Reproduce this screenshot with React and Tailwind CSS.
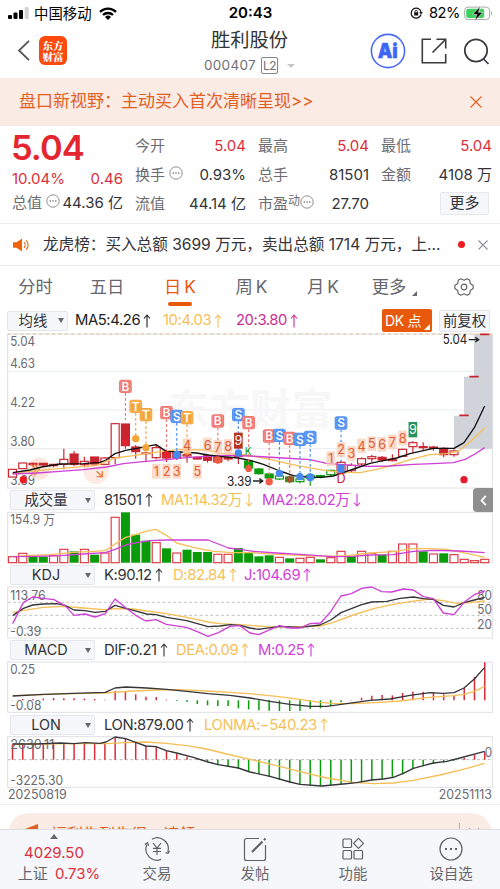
import React from 'react';

const RED = '#c9252f';
const GREEN = '#0a9b0a';
const YELLOW = '#f6bf56';
const PURPLE = '#cf3fd6';
const INK = '#35353a';

// x of the n-th trading day, chart space is 1500 units wide
const dayX = (n) => 37.5 + n * 30.8;

const Arrow = ({ down }) => (
  <svg viewBox="0 0 8 14" className={`ml-[3px] h-[14px] w-[8px] shrink-0 ${down ? 'rotate-180' : ''}`} fill="none" stroke="currentColor" strokeWidth="1.1">
    <path d="M4 13.5V1M1 4.5 4 1l3 3.5" />
  </svg>
);

const Dots = () => (
  <svg viewBox="0 0 14 14" className="mb-[6px] h-[14px] w-[14px] shrink-0" fill="none" stroke="#85858a" strokeWidth="0.9">
    <circle cx="7" cy="7" r="6.2" />
    <path d="M3.6 7h1.4M6.3 7h1.4M9 7h1.4" strokeWidth="1.3" />
  </svg>
);

const StatusBar = () => (
  <div className="flex h-[27px] items-center justify-between pl-2 pr-[7px] text-[15px] text-black">
    <div className="flex w-[180px] items-center">
      <svg viewBox="0 0 21 12" className="h-[12px] w-[21px]">
        <rect x="0" y="8" width="4" height="4" rx="1" />
        <rect x="5.5" y="5.5" width="4" height="6.5" rx="1" />
        <rect x="11" y="3" width="4" height="9" rx="1" />
        <rect x="16.7" y="0" width="4" height="12" rx="1" fill="#d2d2d4" />
      </svg>
      <span className="ml-[5px] text-[14.4px]">中国移动</span>
      <svg viewBox="0 0 18 13" className="ml-[7px] h-[13px] w-[18px]" fill="none" stroke="#000" strokeWidth="2.3">
        <path d="M1 4.8a11.5 11.5 0 0 1 16 0M4 8a7.2 7.2 0 0 1 10 0" />
        <path d="M9 13 6 9.9a4.4 4.4 0 0 1 6 0z" fill="#000" stroke="none" />
      </svg>
    </div>
    <span className="text-[15px] font-semibold">20:43</span>
    <div className="flex w-[180px] items-center justify-end">
      <svg viewBox="0 0 13 12" className="h-[12px] w-[13px]" fill="none" stroke="#111" strokeWidth="1.2">
        <path d="M11 7.5A5 5 0 1 1 11 4.8" />
        <path d="m9.3 5 3.5 0-1.7 2.4z" fill="#111" stroke="none" />
        <rect x="4.2" y="5.3" width="4" height="3.2" fill="#111" stroke="none" />
        <path d="M5 5.5V4.6a1.2 1.2 0 0 1 2.4 0v.9" strokeWidth=".9" />
      </svg>
      <span className="ml-[6px] text-[14.6px] tracking-[-0.4px]">82%</span>
      <svg viewBox="0 0 29 15" className="ml-[4px] h-[15px] w-[29px]">
        <rect x=".6" y="1.1" width="25" height="12.4" rx="3.5" fill="#fff" stroke="#aaa" />
        <rect x="2.2" y="2.7" width="18" height="9.2" rx="2" fill="#3fd05d" />
        <path d="M27 5.2c1.4.4 1.4 3.8 0 4.2z" fill="#aaa" />
        <path d="M16.5 0 8.5 8.4h4.4L10.5 15 19 6.3h-4.6z" fill="#000" stroke="#fff" strokeWidth=".6" />
      </svg>
    </div>
  </div>
);

const NavBar = () => (
  <div className="flex h-[51px] items-start justify-between pl-[17px] pr-[10px]">
    <div className="flex w-[142px] items-center pt-[9px]">
      <svg viewBox="0 0 13 21" className="h-[21px] w-[13px]" fill="none" stroke="#555" strokeWidth="1.8">
        <path d="M12 .8 2 10.5 12 20.2" />
      </svg>
      <div className="ml-[9px] flex h-[29px] w-[28px] flex-col items-center justify-center rounded-[6px] bg-[#fb4a0c] font-['Noto_Serif_CJK_SC','Noto_Sans_CJK_SC',serif] text-[10.5px] font-black leading-[11px] text-white">
        <span>东方</span>
        <span>财富</span>
      </div>
    </div>
    <div className="flex flex-col items-center">
      <span className="text-[19.3px] leading-[27px] text-[#333]">胜利股份</span>
      <div className="flex items-center text-[13.5px] leading-[23px] text-[#6f6f74]">
        <span className="tracking-[0.3px]">000407</span>
        <span className="ml-[5px] rounded-[2px] border border-[#85858a] px-[1px] text-[12px] leading-[15px] tracking-[-0.5px]">L2</span>
        <span className="ml-[9px] border-x-[4px] border-t-[4px] border-x-transparent border-t-[#c6c6ca]" />
      </div>
    </div>
    <div className="flex w-[150px] items-center justify-end pt-[6px]">
      <svg viewBox="0 0 36 36" className="h-[36px] w-[36px]">
        <circle cx="18" cy="18" r="16.6" fill="none" stroke="#4a6cf0" strokeWidth="1.6" />
        <text x="7.8" y="25" fontSize="20" fontWeight="900" fill="#3d66f5" stroke="#3d66f5" strokeWidth=".5" textLength="20" lengthAdjust="spacingAndGlyphs">Ai</text>
      </svg>
      <svg viewBox="0 0 26 26" className="ml-[15px] h-[26px] w-[26px]" fill="none" stroke="#3b3b40" strokeWidth="1.6">
        <path d="M10 1.3H1.3v23.4h23.4V16M15.5 1.3h9.2v9.2M24.5 1.5 11.5 14.5" />
      </svg>
      <svg viewBox="0 0 27 27" className="ml-[16px] h-[27px] w-[27px]" fill="none" stroke="#3b3b40" strokeWidth="1.7">
        <circle cx="13" cy="12.5" r="11.2" />
        <path d="m20.5 21 5 5" />
      </svg>
    </div>
  </div>
);

const Banner = () => (
  <div className="flex h-[48px] items-center justify-between bg-[#fbebe5] pl-[19px] pr-[18px] text-[17px] text-[#e2601f]">
    <span>盘口新视野：主动买入首次清晰呈现&gt;&gt;</span>
    <svg viewBox="0 0 12 12" className="h-[12px] w-[12px]" fill="none" stroke="currentColor" strokeWidth="1.1">
      <path d="m.5.5 11 11m0-11-11 11" />
    </svg>
  </div>
);

const Stat = ({ label, extra, value, red }) => (
  <div className="flex h-[29px] items-center whitespace-nowrap text-[15px]">
    <span className="text-[#6c6c72]">{label}</span>
    {extra}
    <span className={`ml-auto ${red ? 'text-[#dc2f3a]' : 'text-[#333338]'}`}>{value}</span>
  </div>
);

const Quote = () => (
  <div className="grid h-[98px] grid-cols-4 gap-x-3 border-b border-[#ececef] pl-3 pr-2 pt-[6px]">
    <div>
      <div className="ml-[-1px] h-[34px] text-[34.5px] font-semibold leading-[32px] tracking-[-1px] text-[#e3262f]">5.04</div>
      <div className="mt-[3px] flex h-[20px] items-center justify-between text-[15px] text-[#dc2f3a]">
        <span>10.04%</span>
        <span>0.46</span>
      </div>
      <Stat label="总值" extra={<span className="ml-[4px]"><Dots /></span>} value="44.36 亿" />
    </div>
    <div>
      <Stat label="今开" value="5.04" red />
      <Stat label="换手" extra={<span className="ml-[4px]"><Dots /></span>} value="0.93%" />
      <Stat label="流值" value="44.14 亿" />
    </div>
    <div>
      <Stat label="最高" value="5.04" red />
      <Stat label="总手" value="81501" />
      <Stat label="市盈" extra={<><span className="mb-[8px] text-[12px] text-[#6c6c72]">动</span><Dots /></>} value="27.70" />
    </div>
    <div>
      <Stat label="最低" value="5.04" red />
      <Stat label="金额" value="4108 万" />
      <div className="flex h-[27px] items-center justify-end pr-[3px]">
        <span className="flex h-[23px] w-[49px] items-center justify-center rounded-[2px] border border-[#e6e8ed] bg-[#f5f7fa] text-[15px] text-[#333338]">更多</span>
      </div>
    </div>
  </div>
);

const News = () => (
  <div className="flex h-[42px] items-center border-b border-[#ececef] pl-[13px] pr-3 text-[15.6px] text-[#333338]">
    <svg viewBox="0 0 17 14" className="h-[14px] w-[17px] shrink-0">
      <path d="M0 4.2h3.5L9 .5v13L3.5 9.8H0z" fill="#f0620f" />
      <path d="M11 4.2a4 4 0 0 1 0 5.6M13.2 2.4a6.5 6.5 0 0 1 0 9.2" fill="none" stroke="#f0620f" strokeWidth="1.1" />
    </svg>
    <span className="ml-[13px] whitespace-nowrap">龙虎榜：买入总额 3699 万元，卖出总额 1714 万元，上...</span>
    <span className="ml-auto h-[7px] w-[7px] shrink-0 rounded-full bg-[#f01c24]" />
    <svg viewBox="0 0 10 10" className="ml-[13px] h-[10px] w-[10px] shrink-0" fill="none" stroke="#909095" strokeWidth="1.1">
      <path d="m.5.5 9 9m0-9-9 9" />
    </svg>
  </div>
);

const Tabs = () => (
  <div className="flex h-[42px] items-center text-[17.3px] text-[#66666c]">
    <span className="w-[71px] text-center">分时</span>
    <span className="w-[72px] text-center">五日</span>
    <span className="flex h-full w-[73px] flex-col items-center pt-[8px] leading-[26px] text-[#e8590c]">
      <span className="tracking-[-0.9px]">日 K</span>
      <span className="mt-[2px] h-[4px] w-[24px] shrink-0 rounded-full bg-[#e8590c]" />
    </span>
    <span className="w-[70px] text-center tracking-[-0.9px]">周 K</span>
    <span className="w-[73px] text-center tracking-[-0.9px]">月 K</span>
    <span className="flex w-[71px] items-center justify-center">
      更多
      <svg viewBox="0 0 5 5" className="ml-[6px] mt-[13px] h-[5px] w-[5px]"><path d="M5 0v5H0z" fill="#66666c" /></svg>
    </span>
    <svg viewBox="0 0 20 18" className="ml-[24px] h-[18px] w-[20px]" fill="none" stroke="#66666c" strokeWidth="1.2">
      <path d="M6.8.8 10 2.2 13.2.8l2.6 1.5.4 3.2 3 2.1v2.8l-3 2.1-.4 3.2-2.6 1.5L10 15.8l-3.2 1.4-2.6-1.5-.4-3.2-3-2.1V7.6l3-2.1.4-3.2z" strokeLinejoin="round" />
      <circle cx="10" cy="9" r="2.8" />
    </svg>
  </div>
);

const Picker = ({ label, small }) => (
  <div className={`flex h-[20px] shrink-0 items-center rounded-[2px] border border-[#e4e6eb] bg-[#f5f7fa] pr-[3px] text-[14.4px] text-[#333338] ${small ? 'ml-[7px] w-[61px]' : 'ml-[10px] w-[85px]'}`}>
    <span className="flex-1 text-center">{label}</span>
    <span className={`border-x-[3px] border-t-[5px] border-x-transparent border-t-[#66666c] ${small ? '' : 'ml-[4px]'}`} />
  </div>
);

const Indicator = ({ label, items }) => (
  <div className="flex h-[24px] items-center">
    <Picker label={label} />
    <div className="ml-[9px] flex whitespace-nowrap text-[14.8px] tracking-[-0.4px]">
      {items.map(([text, cls, down]) => (
        <span key={text} className={`flex items-center ${cls}`}>{text}<Arrow down={down} /></span>
      ))}
    </div>
  </div>
);

const Frame = ({ y, h }) => <rect x="23" y={y} width="1454" height={h} fill="none" stroke="#e0e1e5" strokeWidth="3" />;

const Line = ({ pts, color }) => <polyline points={pts} fill="none" stroke={color} strokeWidth="4" strokeLinejoin="round" />;

const Label = ({ x, y, w, children, size = 39, color = '#6a6a70' }) => (
  <text x={x} y={y} fontSize={size} fill={color} textLength={w} lengthAdjust="spacingAndGlyphs">{children}</text>
);

// [day, body top, body bottom, wick top, wick bottom, kind]  h = hollow, f = filled
const CANDLES = [
  [0, 418, 441, 418, 441, 'h'], [1, 399, 416, 399, 416, 'h'], [2, 400, 404, 398, 410, 'f'], [3, 400, 405, 399, 410, 'f'],
  [4, 403, 407, 402, 412, 'f'], [5, 388, 403, 356, 418, 'h'], [6, 372, 403, 363, 408, 'f'], [7, 394, 404, 380, 412, 'h'],
  [8, 381, 402, 381, 402, 'f'], [9, 384, 403, 382, 403, 'h'], [10, 281, 383, 281, 403, 'h'], [11, 282, 347, 282, 356, 'f'],
  [12, 351, 365, 345, 386, 'f'], [13, 369, 371, 365, 393, 'f'], [14, 353, 383, 345, 388, 'h'], [15, 364, 384, 360, 396, 'f'],
  [16, 366, 384, 364, 390, 'f'], [17, 374, 378, 370, 398, 'h'], [18, 382, 387, 380, 388, 'f'], [19, 377, 391, 377, 398, 'f'],
  [20, 381, 396, 377, 400, 'f'], [21, 383, 387, 380, 394, 'f'], [22, 376, 379, 360, 402, 'f'], [23, 393, 414, 388, 425, 'g'],
  [24, 417, 431, 414, 434, 'g'], [25, 432, 444, 428, 466, 'g'], [26, 438, 447, 425, 450, 'gh'], [27, 441, 455, 436, 460, 'g'],
  [28, 447, 455, 435, 460, 'gh'], [29, 436, 445, 430, 467, 'g'], [30, 437, 440, 434, 445, 'g'], [31, 421, 434, 419, 440, 'gh'],
  [32, 397, 429, 392, 432, 'h'], [33, 406, 422, 400, 428, 'h'], [34, 386, 402, 382, 405, 'h'], [35, 380, 386, 374, 396, 'h'],
  [36, 382, 390, 378, 396, 'f'], [37, 388, 392, 373, 394, 'h'], [38, 358, 379, 356, 381, 'h'], [39, 338, 350, 333, 368, 'h'],
  [40, 350, 353, 337, 360, 'f'], [41, 351, 355, 348, 362, 'f'], [42, 355, 374, 352, 382, 'f'], [43, 363, 374, 358, 380, 'h'],
];

const Candle = ({ d: [n, t, b, wt, wb, kind] }) => {
  const color = kind[0] === 'g' ? GREEN : RED;
  const hollow = kind.endsWith('h');
  return (
    <g stroke={color} strokeWidth="3.5">
      <path d={`M${dayX(n)} ${wt}V${wb}`} />
      <rect x={dayX(n) - 12} y={t} width="24" height={b - t} fill={hollow ? '#fff' : color} />
    </g>
  );
};

// [day, centre y of badge, letter, dashed line end]
const SIGNALS = [
  [11, 169, 'B', 270], [12, 229, 'T', 325], [13, 254, 'T', 350], [15, 248, 'B', 360], [16, 259, 'S', 368], [17, 263, 'T', 355],
  [20, 273, 'B', 385], [22, 254, 'S', 368], [23, 278, 'B', 410], [25, 318, 'B', 450], [26, 316, 'S', 425], [27, 325, 'B', 445],
  [28, 328, 'S', 437], [29, 322, 'S', 438], [32, 279, 'S', 400],
];
const SIGNAL_COLOR = { B: '#f0726c', T: '#f4a53a', S: '#4b8df2' };

// [day, baseline y, digit]
const COUNTS = [
  [14, 438, '1'], [15, 438, '2'], [16, 438, '3'], [17, 361, '4'], [18, 438, '5'], [19, 359, '6'], [20, 366, '7'], [21, 363, '8'],
  [31, 400, '1'], [32, 373, '2'], [33, 384, '3'], [34, 362, '4'], [35, 355, '5'], [36, 357, '6'], [37, 350, '7'], [38, 338, '8'],
];

const PriceChart = () => (
  <svg viewBox="0 12 1500 462" className="block h-[154px] w-[500px] overflow-visible">
    <Frame y={12} h={462} />
    <path d="M23 124H1477M23 240H1477M23 356H1477" stroke="#e8edf2" strokeWidth="3" />
    <text x="505" y="282" fontSize="122" fontWeight="700" fill="#f7f7f8" textLength="492">东方财富</text>
    <path d="M1362 356V257H1392V140H1422V12H1477V356Z" fill="#d0d3da" />
    <path d="M23 12.5H1477" stroke="#e8c9a8" strokeWidth="4" strokeDasharray="10 9" />
    <path d="M1378 256h28M1408 140h28M1440 13h28" stroke={RED} strokeWidth="5" />

    <Label x={31} y={47} w={74}>5.04</Label>
    <Label x={31} y={114} w={74}>4.63</Label>
    <Label x={31} y={231} w={74}>4.22</Label>
    <Label x={31} y={347} w={74}>3.80</Label>
    <Label x={31} y={464} w={74}>3.39</Label>

    <circle cx="118" cy="416" r="33" fill="#fbdccf" opacity=".7" />
    <circle cx="288" cy="424" r="38" fill="#fbdccf" opacity=".6" />
    {CANDLES.map((d) => <Candle key={d[0]} d={d} />)}
    <path d="m93 402 15 16-15 18m10-34 15 16-15 18" fill="none" stroke="#ee7a3c" strokeWidth="4" />
    <path d="m290 424 17 16m0-16v16h-17" fill="none" stroke="#ee7a3c" strokeWidth="4" />

    <Line color={YELLOW} pts="38,430 90,424 150,418 220,412 290,406 345,384 400,377 440,370 490,364 540,358 570,359 620,360 665,371 720,372 750,377 800,386 860,400 920,412 980,422 1030,427 1080,428 1130,418 1180,405 1230,389 1290,374 1340,371 1376,363 1410,336 1454,293" />
    <Line color={PURPLE} pts="38,432 110,429 180,424 250,419 320,411 370,401 430,395 500,389 560,383 620,379 680,376 750,378 850,384 930,389 980,400 1030,404 1100,409 1170,408 1240,403 1300,401 1360,398 1395,388 1425,372 1454,353" />
    <Line color="#111" pts="38,428 90,420 125,411 180,402 250,401 300,397 318,390 345,371 377,361 410,355 468,344 499,364 540,366 590,369 625,375 660,379 715,384 750,391 790,403 840,423 880,437 920,441 965,442 1000,438 1040,424 1070,414 1110,400 1150,392 1190,384 1230,371 1270,362 1300,355 1362,355 1392,338 1423,293 1454,228" />

    {SIGNALS.map(([n, y, c, end]) => (
      <g key={n}>
        <path d={`M${dayX(n)} ${y + 20}V${end}`} stroke={SIGNAL_COLOR[c]} strokeWidth="3.5" strokeDasharray="8 7" />
        <rect x={dayX(n) - 19} y={y - 20} width="38" height="40" rx="8" fill={SIGNAL_COLOR[c]} />
        <rect x={dayX(n) - 15} y={y - 16} width="30" height="32" rx="5" fill="none" stroke="#fff" strokeWidth="1.5" opacity=".4" />
        <text x={dayX(n)} y={y + 13} fontSize="36" fontWeight="600" textAnchor="middle" fill="#fff">{c}</text>
      </g>
    ))}

    <g fill="#f4a53a"><circle cx={dayX(12)} cy="326" r="11" /><circle cx={dayX(13)} cy="353" r="11" /><circle cx={dayX(17)} cy="363" r="11" /></g>
    <g fill="#4389ef">
      <circle cx={dayX(16)} cy="374" r="12" /><circle cx={dayX(22)} cy="369" r="11" /><circle cx={dayX(26)} cy="430" r="11" />
      <circle cx={dayX(28)} cy="440" r="11" /><circle cx={dayX(29)} cy="442" r="12" />
      <rect x={dayX(32) - 10} y="404" width="20" height="24" />
    </g>
    <g fill="#ee5a45">
      <circle cx={dayX(11)} cy="337" r="10" fill="#e0242e" /><circle cx={dayX(15)} cy="374" r="11" fill="#e0242e" />
      <circle cx={dayX(20)} cy="390" r="11" /><circle cx={dayX(23)} cy="416" r="10" /><circle cx={dayX(25)} cy="455" r="11" />
      <circle cx={dayX(27)} cy="448" r="10" fill="#a8552f" />
    </g>

    {COUNTS.map(([n, y, c]) => (
      <g key={n}>
        <rect x={dayX(n) - 13} y={y - 36} width="26" height="44" fill="#fbcdb8" opacity=".75" />
        <text x={dayX(n)} y={y} fontSize="38" textAnchor="middle" fill="#dd5c33">{c}</text>
      </g>
    ))}
    <rect x={dayX(22) - 13} y="308" width="26" height="48" fill="#b7321f" />
    <text x={dayX(22)} y="346" fontSize="38" textAnchor="middle" fill="#fff">9</text>
    <rect x={dayX(39) - 13} y="276" width="26" height="46" fill="#27915a" />
    <text x={dayX(39)} y="312" fontSize="38" textAnchor="middle" fill="#fff">9</text>
    <text x="734" y="375" fontSize="30" fill={GREEN}>K</text>
    <text x={dayX(32)} y="460" fontSize="38" textAnchor="middle" fill={RED}>D</text>

    <circle cx="70" cy="449" r="11" fill="#f01c24" />
    <circle cx="1392" cy="449" r="11" fill="#e31b2f" />
    <Label x={1328} y={43} w={74} color="#222">5.04</Label>
    <path d="M1406 29h30M1426 22l10 7-10 7" fill="none" stroke="#222" strokeWidth="4" />
    <Label x={681} y={467} w={74} color="#222">3.39</Label>
    <path d="M759 453h29M778 446l10 7-10 7" fill="none" stroke="#222" strokeWidth="4" />
  </svg>
);

// bar heights, negative = down day
const VOLUME = [
  18, 28, -18, -18, 21, 40, -34, 40, -24, 29, 136, -151, -84, -66, 60, -43, 29, -39, -32, -32, 25, 25, -44, -30,
  -19, -22, 16, -13, 13, 16, -10, 15, 34, -19, 34, 28, -24, 34, 56, 56, -34, 26, -28, 24, 10, 6, 10,
];

const VolumeChart = () => (
  <svg viewBox="0 72 1500 153" className="block h-[51px] w-[500px] overflow-visible">
    <Frame y={73} h={151} />
    {VOLUME.map((v, i) => v > 0
      ? <rect key={i} x={dayX(i) - 12} y={224 - v} width="24" height={v} fill="#fff" stroke="#de3b45" strokeWidth="3.5" />
      : <rect key={i} x={dayX(i) - 13.5} y={224 + v} width="27" height={-v} fill={GREEN} />)}
    <Line color={YELLOW} pts="38,206 90,202 150,200 220,193 280,190 316,188 345,168 377,148 407,140 437,130 468,124 499,142 530,165 580,178 640,190 700,194 750,194 830,199 900,202 980,205 1040,203 1085,198 1130,194 1190,190 1230,182 1290,182 1340,184 1390,194 1454,208" />
    <Line color={PURPLE} pts="38,206 110,205 180,203 250,198 316,194 345,184 377,171 410,164 450,158 500,156 624,156 655,168 685,180 720,184 760,190 830,195 900,199 1000,206 1060,205 1110,201 1180,200 1240,190 1300,187 1380,189 1454,194" />
    <Label x={31} y={109} w={134}>154.9 万</Label>
  </svg>
);

const KdjChart = () => (
  <svg viewBox="0 297 1500 153" className="block h-[51px] w-[500px] overflow-visible">
    <Frame y={297} h={153} />
    <path d="M23 343H1477M23 382H1477M23 421H1477" stroke="#c4c4c8" strokeWidth="3" strokeDasharray="9 7" />
    <Label x={31} y={335} w={106}>113.76</Label>
    <Label x={31} y={443} w={93}>-0.39</Label>
    <Label x={1432} y={336} w={44}>80</Label>
    <Label x={1432} y={379} w={44}>50</Label>
    <Label x={1432} y={423} w={44}>20</Label>
    <Line color={YELLOW} pts="38,374 70,367 130,358 190,355 250,360 310,365 345,362 400,363 440,369 500,377 560,388 624,402 660,407 720,410 800,416 870,417 960,414 1000,403 1060,381 1120,362 1180,349 1230,341 1290,333 1330,338 1370,346 1410,344 1454,339" />
    <Line color={INK} pts="38,383 70,361 98,351 130,348 170,347 195,352 222,366 255,368 285,373 316,370 345,352 377,361 400,367 440,378 468,380 500,388 560,398 624,416 660,414 690,410 720,412 750,420 775,424 840,415 900,418 960,411 992,396 1023,374 1054,362 1085,350 1115,342 1160,340 1200,331 1240,327 1270,332 1300,334 1330,352 1362,357 1392,344 1423,336 1454,328" />
    <Line color={PURPLE} pts="38,407 70,344 98,327 130,331 162,335 195,353 222,382 255,378 285,387 316,377 345,333 377,359 407,382 437,399 468,395 499,409 560,418 590,430 624,445 655,434 690,415 720,413 750,435 776,440 805,427 838,413 870,420 900,420 930,407 962,405 992,371 1023,324 1054,317 1085,301 1115,297 1145,311 1175,312 1210,303 1240,306 1270,326 1300,332 1330,375 1362,380 1392,343 1423,320 1454,309" />
  </svg>
);

const MACD_BARS = [
  -1, 4, 4, 5, 7, 6, 6, 5, 4, 2, 29, 26, 18, 11, 10, 2, -2, -5, -11, -15, -17, -17, -24, -27,
  -30, -31, -32, -32, -32, -26, -24, -17, -6, 1, 8, 14, 16, 15, 22, 26, 26, 24, 18, 13, 38, 70, 114,
];

const MacdChart = () => (
  <svg viewBox="0 66 1500 150" className="block h-[50px] w-[500px] overflow-visible">
    <Frame y={66} h={151} />
    {MACD_BARS.map((v, i) => <path key={i} d={`M${dayX(i)} 181V${181 - v}`} stroke={v > 0 ? '#d92b3a' : GREEN} strokeWidth="4.5" />)}
    <Label x={31} y={102} w={74}>0.25</Label>
    <Label x={31} y={210} w={93}>-0.08</Label>
    <Line color={YELLOW} pts="38,167 130,164 220,161 316,159 400,153 468,150 540,149 620,153 700,158 750,161 830,169 900,178 960,187 1000,190 1060,191 1140,187 1200,183 1280,173 1360,167 1392,163 1423,154 1454,139" />
    <Line color={INK} pts="38,168 130,163 220,160 316,157 345,144 377,141 440,144 500,148 560,154 624,161 690,166 750,174 810,184 870,193 930,199 980,199 1040,191 1110,181 1170,177 1230,166 1290,158 1330,160 1362,158 1392,144 1423,117 1454,82" />
  </svg>
);

const LON_BARS = [
  48, 48, 48, 48, 48, 49, 48, 49, 49, 49, 66, 64, 52, 42, 39, 26, 18, 9, 3, -4, -17, -22, -27, -36,
  -43, -52, -61, -69, -74, -78, -79, -77, -73, -71, -68, -63, -59, -54, -44, -27, -18, -12, -8, -3, 6, 15, 24,
];

const LonChart = () => (
  <svg viewBox="0 291 1500 150" className="block h-[50px] w-[500px] overflow-visible">
    <Frame y={290} h={152} />
    <path d="M23 359H1477" stroke="#b9b9be" strokeWidth="3" strokeDasharray="9 7" />
    {LON_BARS.map((v, i) => (
      <path key={i} d={`M${dayX(i)} 359V${359 - v}`} stroke={v > 0 ? '#d92b3a' : GREEN} strokeWidth="4.5" />
    ))}
    <Label x={31} y={327} w={132}>2630.11</Label>
    <Label x={31} y={435} w={158}>-3225.30</Label>
    <Label x={1454} y={351} w={22}>0</Label>
    <Line color={YELLOW} pts="38,313 110,312 220,311 316,311 377,308 440,306 500,310 560,317 620,327 680,342 750,358 830,377 900,395 980,414 1060,427 1120,431 1180,429 1240,421 1320,405 1390,388 1454,370" />
    <Line color={INK} pts="38,312 110,312 180,309 222,311 255,308 300,310 318,306 345,291 377,296 407,307 437,318 468,320 499,332 530,339 580,352 624,366 655,374 715,384 750,396 810,409 870,426 900,433 965,438 1030,432 1070,428 1115,420 1150,417 1180,412 1210,400 1240,385 1270,377 1300,369 1340,364 1380,354 1454,334" />
  </svg>
);

const BottomItem = ({ label, children }) => (
  <div className="flex w-[98px] flex-col items-center pt-[6px] text-[14.4px] text-[#66666c]">
    <svg viewBox="0 0 26 26" className="h-[26px] w-[26px]" fill="none" stroke="#5f5f65" strokeWidth="1.2">{children}</svg>
    <span className="mt-[3px] leading-[18px]">{label}</span>
  </div>
);

const BottomBar = () => (
  <div className="flex h-[60px] border-t border-[#dcdee3] bg-[#f5f7fa]">
    <div className="flex w-[108px] flex-col items-center pt-[4px] text-[15px]">
      <span className="border-x-[4px] border-b-[5px] border-x-transparent border-b-[#66666c]" />
      <span className="mt-[4px] leading-[20px] text-[#dc2f3a]">4029.50</span>
      <span className="ml-[10px] leading-[22px] text-[#66666c]">上证 <span className="ml-[3px] text-[#dc2f3a]">0.73%</span></span>
    </div>
    <BottomItem label="交易">
      <path d="M3 8.5A11 11 0 0 0 17 23.4M8 3.2A11 11 0 0 1 23.8 16M.8 8.6l2.8-2 1 3.2M21.6 16.6l2.4.8 1.6-2.4M9 7l4 5 4-5M13 12v7M9 12.3h8M9 15.5h8" />
    </BottomItem>
    <BottomItem label="发帖">
      <path d="M17 2.5H4.5a2 2 0 0 0-2 2v18a2 2 0 0 0 2 2h17a2 2 0 0 0 2-2V9" />
      <path d="m10 16 10.5-10.5" strokeWidth="2.2" />
      <path d="m22 4 1.4-1.4" strokeWidth="2.2" />
    </BottomItem>
    <BottomItem label="功能">
      <rect x="3" y="3" width="8.5" height="8.5" rx="1" />
      <rect x="3" y="14.5" width="8.5" height="8.5" rx="1" />
      <rect x="14" y="14.5" width="8.5" height="8.5" rx="1" />
      <path d="m18.5 2.3 5 5-5 5-5-5z" strokeLinejoin="round" />
    </BottomItem>
    <BottomItem label="设自选">
      <circle cx="13" cy="13" r="11" />
      <path d="M7 13h2M12 13h2M17 13h2" strokeWidth="1.9" />
    </BottomItem>
  </div>
);

export default function App() {
  return (
    <div className="flex h-[889px] w-[500px] flex-col overflow-hidden bg-white font-['Inter','Noto_Sans_CJK_SC',sans-serif]">
      <StatusBar />
      <NavBar />
      <Banner />
      <Quote />
      <News />
      <Tabs />

      <div className="flex h-[26px] items-center pb-[1px] pr-[10px]">
        <Picker label="均线" small />
        <div className="ml-[7px] flex whitespace-nowrap text-[14.8px] tracking-[-0.4px]">
          <span className="flex w-[88px] items-center text-[#222]">MA5:4.26<Arrow /></span>
          <span className="flex w-[73px] items-center text-[#f6bf56]">10:4.03<Arrow /></span>
          <span className="flex items-center text-[#cc2f8f]">20:3.80<Arrow /></span>
        </div>
        <div className="relative ml-auto flex h-[23px] w-[50px] items-center rounded-[2px] bg-[#e8590c] pl-[3px] text-[14px] tracking-[-0.3px] text-white">
          DK 点
          <svg viewBox="0 0 6 6" className="absolute bottom-[2px] right-[2px] h-[6px] w-[6px]"><path d="M6 0v6H0z" fill="#fff" /></svg>
        </div>
        <span className="ml-[7px] flex h-[22px] w-[51px] items-center justify-center whitespace-nowrap rounded-[2px] border border-[#e4e6eb] bg-[#f5f7fa] text-[14.4px] text-[#333338]">前复权</span>
      </div>
      <PriceChart />

      <div className="relative">
        <Indicator label="成交量" items={[['81501', 'w-[57px] text-[#333338]'], ['MA1:14.32万', 'w-[101px] text-[#f6bf56]', true], ['MA2:28.02万', 'text-[#cf3fd6]', true]]} />
        <div className="absolute right-[7px] top-0 flex h-[24px] w-[20px] items-center justify-center rounded-l-[4px] bg-[#8f8f8f]">
          <svg viewBox="0 0 7 12" className="h-[11px] w-[7px]" fill="none" stroke="#fff" strokeWidth="2"><path d="M6 1 1.5 6 6 11" /></svg>
        </div>
      </div>
      <VolumeChart />
      <Indicator label="KDJ" items={[['K:90.12', 'w-[69px] text-[#333338]'], ['D:82.84', 'w-[71px] text-[#f6bf56]'], ['J:104.69', 'text-[#cf3fd6]']]} />
      <KdjChart />
      <Indicator label="MACD" items={[['DIF:0.21', 'w-[72px] text-[#333338]'], ['DEA:0.09', 'w-[82px] text-[#f6bf56]'], ['M:0.25', 'text-[#cf3fd6]']]} />
      <MacdChart />
      <div className="pt-[1px]">
        <Indicator label="LON" items={[['LON:879.00', 'w-[100px] text-[#333338]'], ['LONMA:−540.23', 'text-[#f6bf56]']]} />
      </div>
      <LonChart />

      <div className="flex h-[18px] items-center justify-between border-b border-[#ececef] px-[8px] text-[12.4px] text-[#6a6a70]">
        <span>20250819</span>
        <span>20251113</span>
      </div>
      <div className="h-[24px] overflow-hidden px-[8px] pt-[8px]">
        <div className="flex h-[42px] items-start rounded-[21px] bg-[#fbebe5] pl-[17px] pr-[12px] pt-[10px] text-[16px] leading-[22px] text-[#e2601f]">
          <svg viewBox="0 0 14 12" className="mt-[1px] h-[12px] w-[14px]"><path d="M13 0v12L0 5z" fill="currentColor" /></svg>
          <span className="ml-[12px]">福利先到先得，请领</span>
          <span className="ml-auto h-[14px] w-px bg-[#d9a58d]" />
          <svg viewBox="0 0 12 12" className="ml-[8px] mt-[4px] h-[12px] w-[12px]" stroke="#c79a85"><path d="m1 1 10 10m0-10L1 11" /></svg>
        </div>
      </div>
      <BottomBar />
    </div>
  );
}
